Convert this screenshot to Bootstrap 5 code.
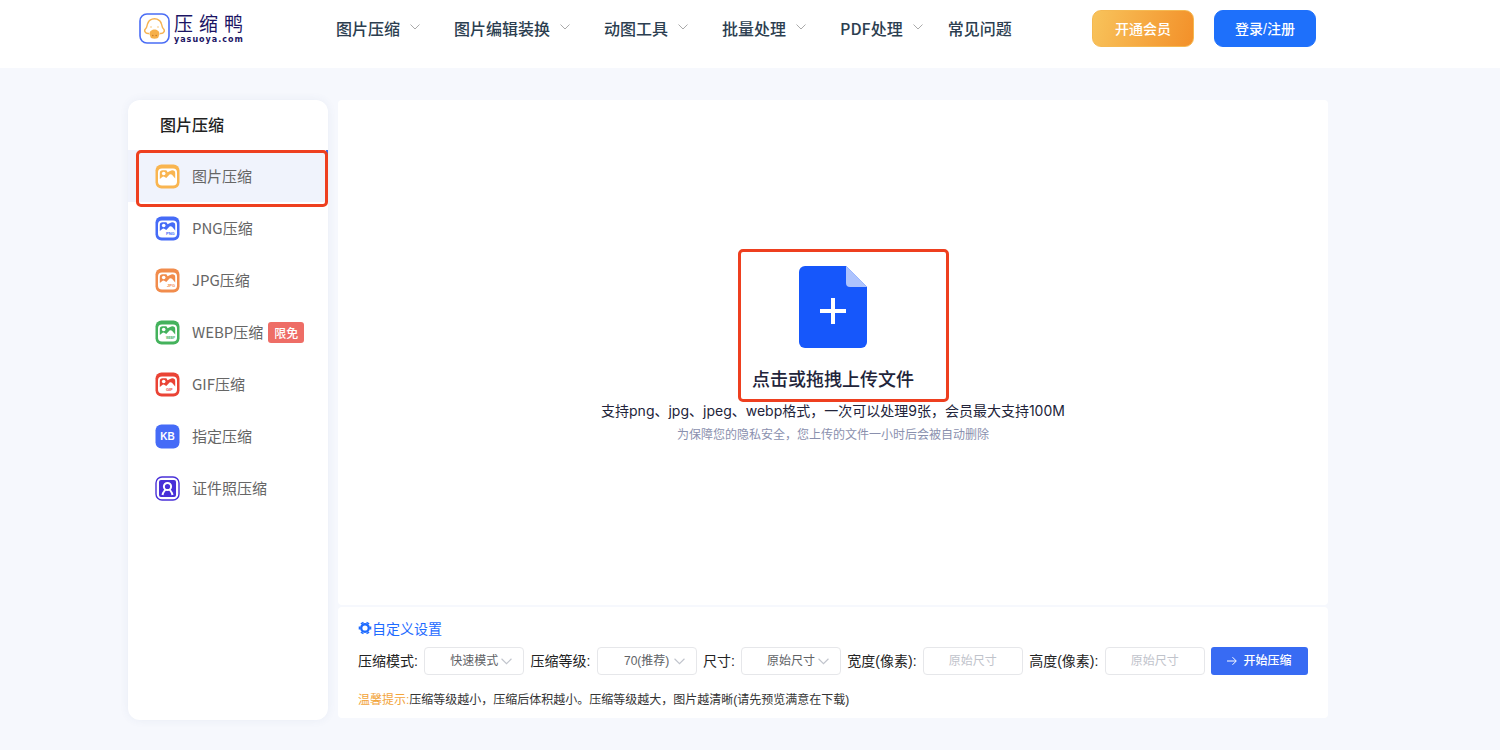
<!DOCTYPE html>
<html lang="zh-CN">
<head>
<meta charset="utf-8">
<meta name="viewport" content="width=device-width, initial-scale=1">
<title>压缩鸭</title>
<link href="https://cdn.jsdelivr.net/npm/bootstrap@5.3.0/dist/css/bootstrap.min.css" rel="stylesheet">
<style>
  body { background: #f6f8fd; font-family: "Liberation Sans", "Noto Sans CJK SC", sans-serif; font-size: 14px; line-height: 20px; color: #222; }
  a { text-decoration: none; }
  .shell { width: 100%; max-width: 1244px; margin: 0 auto; padding-right: 44px; }
  .site-head { height: 68px; }
  .brand { width: 208px; padding: 13px 0 0 11px; gap: 4px; color: #1b1464; }
  .brand-cn { font: 400 19px/20px "Noto Sans CJK SC", sans-serif; letter-spacing: 6px; }
  .brand-en { font: 700 8px/8px "DejaVu Sans", sans-serif; letter-spacing: 1px; margin-top: 3px; }
  .menu { gap: 34px; padding-top: 16px; font: 500 16px/24px "Noto Sans CJK SC", sans-serif; }
  .menu a { color: #2c3e50; gap: 10px; height: 24px; }
  .menu svg { margin-bottom: 3px; }
  .menu .last { margin-left: -9px; }
  .top-actions { gap: 20px; padding: 10px 12px 0 0; }
  .top-btn { width: 102px; height: 37px; border-radius: 9px; padding: 0; color: #fff; font: 500 14px/20px "Liberation Sans", "Noto Sans CJK SC", sans-serif; border: 1px solid #1e70fb; background: #1e70fb; }
  .top-btn.vip { background: linear-gradient(105deg, #f8c35b, #f39029); border-color: #f5b952; }
  .page-main { padding-top: 32px; padding-bottom: 30px; }
  .side { width: 200px; min-height: 620px; border-radius: 12px; box-shadow: 0 0 10px rgba(60,80,140,.07); }
  .side h2 { font: 500 16px/24px "Noto Sans CJK SC", sans-serif; padding: 12px 0 14px 32px; margin: 0; color: #222; }
  .side-link { height: 52px; padding-left: 27px; gap: 12px; font: 400 15px/22px "Noto Sans CJK SC", sans-serif; color: #666; }
  .side-link text { font-family: "Liberation Sans", sans-serif; }
  .side-link.current { background: #f0f3fc; border-right: 2px solid #3a6ff0; }
  .free { background: #ee6d66; color: #fff; font-size: 12px; line-height: 21px; font-weight: 500; border-radius: 3px; padding: 0 6px; margin-left: -7px; }
  .callout-box { position: absolute; border: 3px solid #ee3f1f; border-radius: 5px; pointer-events: none; }
  .side .callout-box { inset: 0 0 -5px 8px; z-index: 1; }
  .work { margin-left: 10px; gap: 2px; min-width: 0; }
  .panel { background: #fff; border-radius: 4px; }
  .drop { min-height: 505px; padding-bottom: 10px; }
  .drop-main { border: 0; background: none; padding: 15px 14px 16px; font: 500 18px/26px "Noto Sans CJK SC", sans-serif; color: #22243a; }
  .drop-main svg { margin-bottom: 17px; }
  .drop .callout-box { inset: -2px -21px 5px 0; }
  .formats { font-family: Inter, "Noto Sans CJK SC", sans-serif; color: #22243a; margin-top: -6px; }
  .privacy { font-size: 12px; color: #8a90ae; margin-top: 4px; }
  .settings { padding: 11px 20px 9px; }
  .settings h3 { font: 400 14px/20px "Noto Sans CJK SC", sans-serif; color: #1e6bff; margin: 0 0 9px; }
  .fields { gap: 6px; color: #222; }
  .fields select, .fields input { width: 100px; height: 28px; border: 1px solid #e6e7ea; border-radius: 4px; background: #fff; font-size: 12px; color: #606266; text-align: center; text-align-last: center; appearance: none; padding: 0 16px; }
  .fields input::placeholder { color: #bfc3cb; opacity: 1; }
  .pick svg { position: absolute; right: 12px; top: 11px; pointer-events: none; }
  .go { width: 97px; height: 28px; padding: 0; border: 0; border-radius: 3px; background: #386bf3; color: #fff; font-size: 12px; font-weight: 500; gap: 6px; }
  .tip { font-size: 12px; line-height: 18px; margin: 16px 0 0; color: #333; }
  .tip span { color: #f2a43a; }
</style>
</head>
<body>
<svg width="0" height="0" class="position-absolute" aria-hidden="true">
  <symbol id="chev" viewBox="0 0 10 6"><path d="M.5 .5 5 5 9.500 .5" fill="none" stroke="currentColor"/></symbol>
  <symbol id="pic" viewBox="0 0 25 25">
    <rect x=".5" y=".5" width="24" height="24" rx="6" fill="currentColor"/>
    <rect x="3" y="4.500" width="19" height="17" rx="4" fill="#fff"/>
    <path d="M4.800 15V9Q4.800 6.200 7.600 6.200h9.800Q20.200 6.200 20.200 9V14.500L17 10.800Q15.800 9.600 14.500 10.600L11.300 14 9.200 12.800Q8 12.300 7 13.200Z" fill="currentColor"/>
    <path d="M11.300 6H17L12.600 8.200Z" fill="#fff"/>
    <circle cx="8.700" cy="9.500" r="1.800" fill="#fff"/>
  </symbol>
</svg>

<header class="bg-white site-head">
  <div class="shell d-flex">
    <a href="#" class="brand d-flex">
      <svg width="31" height="31" viewBox="0 0 31 31" fill="none">
        <rect x="1" y="1" width="29" height="29" rx="7" stroke="#4a6df5" stroke-width="1.600"/>
        <path d="M10 20.500C6 21 4.500 17.500 6.800 15.500 8 14.500 8 12.500 8.500 11 9.500 8 12 6.500 13 6.200q2.500-1 5 0c2 .8 4 2.800 4.500 4.800.5 1.500.5 3.500 1.700 4.500 2.300 2 .8 5.500-3.200 5" stroke="#f6b352" stroke-width="1.400"/>
        <path d="M10.500 21c0-6 10-6 10 0 0 1-.8 1.500-.8 2.500 0 3-8.400 3-8.400 0 0-1-.8-1.500-.8-2.500Z" fill="#f6b04a"/>
        <circle cx="12" cy="14" r=".7" fill="#f6b352"/><circle cx="19" cy="14" r=".7" fill="#f6b352"/>
        <circle cx="13.800" cy="22.500" r=".8" fill="#c87c28"/><circle cx="17.200" cy="22.500" r=".8" fill="#c87c28"/>
      </svg>
      <span class="d-flex flex-column"><span class="brand-cn">压缩鸭</span><span class="brand-en">yasuoya.com</span></span>
    </a>
    <nav class="menu d-flex flex-grow-1">
      <a href="#" class="d-flex align-items-center">图片压缩<svg width="10" height="6" color="#aaa"><use href="#chev"/></svg></a>
      <a href="#" class="d-flex align-items-center">图片编辑装换<svg width="10" height="6" color="#aaa"><use href="#chev"/></svg></a>
      <a href="#" class="d-flex align-items-center">动图工具<svg width="10" height="6" color="#aaa"><use href="#chev"/></svg></a>
      <a href="#" class="d-flex align-items-center">批量处理<svg width="10" height="6" color="#aaa"><use href="#chev"/></svg></a>
      <a href="#" class="d-flex align-items-center">PDF处理<svg width="10" height="6" color="#aaa"><use href="#chev"/></svg></a>
      <a href="#" class="d-flex align-items-center last">常见问题</a>
    </nav>
    <div class="d-flex top-actions">
      <button type="button" class="top-btn vip">开通会员</button>
      <button type="button" class="top-btn">登录/注册</button>
    </div>
  </div>
</header>

<main class="shell d-flex align-items-start page-main">
  <aside class="side bg-white flex-shrink-0">
    <h2>图片压缩</h2>
    <nav>
      <div class="position-relative">
        <a href="#" class="side-link current d-flex align-items-center" aria-current="page"><svg width="25" height="25" color="#f9b550"><use href="#pic"/></svg>图片压缩</a>
        <div class="callout-box"></div>
      </div>
      <a href="#" class="side-link d-flex align-items-center"><svg width="25" height="25" color="#456bf7"><use href="#pic"/><text x="11" y="18.500" font-size="4" font-weight="700" fill="currentColor">PNG</text></svg>PNG压缩</a>
      <a href="#" class="side-link d-flex align-items-center"><svg width="25" height="25" color="#f18c4c"><use href="#pic"/><text x="12" y="18.500" font-size="4" font-weight="700" fill="currentColor">JPG</text></svg>JPG压缩</a>
      <a href="#" class="side-link d-flex align-items-center"><svg width="25" height="25" color="#44b25c"><use href="#pic"/><text x="11" y="18.500" font-size="3" font-weight="700" fill="currentColor">WEBP</text></svg>WEBP压缩<span class="free">限免</span></a>
      <a href="#" class="side-link d-flex align-items-center"><svg width="25" height="25" color="#ea4335"><use href="#pic"/><text x="11" y="18.500" font-size="4" font-weight="700" fill="currentColor">GIF</text></svg>GIF压缩</a>
      <a href="#" class="side-link d-flex align-items-center"><svg width="25" height="25"><rect x=".5" y=".5" width="24" height="24" rx="6" fill="#456bf7"/><text x="12.500" y="16" font-size="10" font-weight="700" text-anchor="middle" fill="#fff">KB</text></svg>指定压缩</a>
      <a href="#" class="side-link d-flex align-items-center"><svg width="25" height="25" fill="none"><rect x="1" y="1" width="23" height="23" rx="6" stroke="#4930d8" stroke-width="1.400"/><rect x="4" y="4" width="17" height="17" rx="2" fill="#4930d8"/><circle cx="12.500" cy="10.500" r="3.600" stroke="#fff" stroke-width="2"/><path d="M10.500 13.500 9 15.500Q7.800 17 7.500 19M14.500 13.500l1.500 2q1.200 1.500 1.500 3.500" stroke="#fff" stroke-width="2"/></svg>证件照压缩</a>
    </nav>
  </aside>

  <section class="work d-flex flex-column flex-grow-1">
    <div class="panel drop d-flex flex-column align-items-center justify-content-center text-center">
      <div class="position-relative">
        <button type="button" class="drop-main d-flex flex-column align-items-center">
          <svg width="68" height="82" viewBox="0 0 68 82"><path d="M6 0H47L68 21V76a6 6 0 0 1-6 6H6a6 6 0 0 1-6-6V6A6 6 0 0 1 6 0Z" fill="#1657fb"/><path d="M47 0 68 21H51a4 4 0 0 1-4-4Z" fill="#adc3fd"/><path d="M21 45H47M34 32V58" stroke="#fff" stroke-width="4"/></svg>
          点击或拖拽上传文件
        </button>
        <div class="callout-box"></div>
      </div>
      <div class="formats">支持png、jpg、jpeg、webp格式，一次可以处理9张，会员最大支持100M</div>
      <div class="privacy">为保障您的隐私安全，您上传的文件一小时后会被自动删除</div>
    </div>
    <form class="panel settings">
      <h3 class="d-flex align-items-center"><svg width="14" height="14" viewBox="0 0 14 14"><g fill="none" stroke="#1e6bff"><circle cx="7" cy="7" r="3.800" stroke-width="2.400"/><path d="M12 7H13.300M9.500 2.700 10.200 1.500M4.500 2.700 3.800 1.500M2 7H.7M4.500 11.300 3.800 12.500M9.500 11.300l.7 1.200" stroke-width="3"/></g></svg>自定义设置</h3>
      <div class="fields d-flex flex-wrap align-items-center justify-content-between">
        <label for="mode">压缩模式:</label>
        <div class="pick position-relative"><select id="mode"><option>快速模式</option></select><svg width="11" height="7" color="#c0c4cc"><use href="#chev"/></svg></div>
        <label for="level">压缩等级:</label>
        <div class="pick position-relative"><select id="level"><option>70(推荐)</option></select><svg width="11" height="7" color="#c0c4cc"><use href="#chev"/></svg></div>
        <label for="size">尺寸:</label>
        <div class="pick position-relative"><select id="size"><option>原始尺寸</option></select><svg width="11" height="7" color="#c0c4cc"><use href="#chev"/></svg></div>
        <label for="w">宽度(像素):</label>
        <input id="w" type="text" placeholder="原始尺寸">
        <label for="h">高度(像素):</label>
        <input id="h" type="text" placeholder="原始尺寸">
        <button type="button" class="go d-flex align-items-center justify-content-center"><svg width="10" height="10" viewBox="0 0 10 10" fill="none" stroke="#fff"><path d="M0 5H9M5.500 1.200 9.300 5 5.500 8.800"/></svg>开始压缩</button>
      </div>
      <p class="tip"><span>温馨提示:</span>压缩等级越小，压缩后体积越小。压缩等级越大，图片越清晰(请先预览满意在下载)</p>
    </form>
  </section>
</main>
<script src="https://cdn.jsdelivr.net/npm/bootstrap@5.3.0/dist/js/bootstrap.bundle.min.js"></script>
</body>
</html>
